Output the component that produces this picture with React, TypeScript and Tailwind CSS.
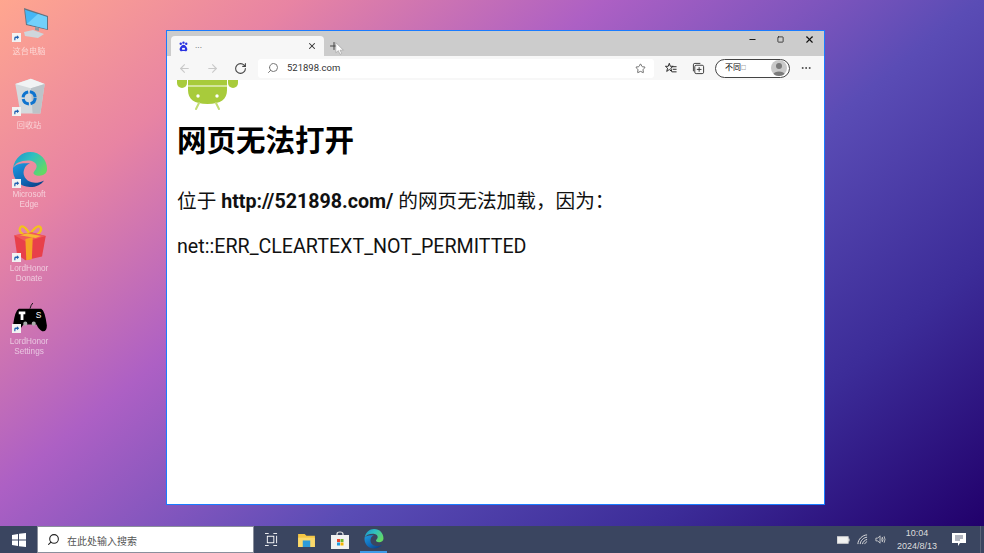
import { ArrowLeft, ArrowRight, RotateCw, Search, Star, X, Plus, Minus, Square, MoreHorizontal } from "lucide-react";

const cjk = "font-['Roboto','Noto_Sans_CJK_SC',sans-serif]";

const Shortcut = () => (
  <svg viewBox="0 0 10 10" className="absolute left-[1px] bottom-0 size-[9px]">
    <rect width="10" height="10" fill="#f2f2f2" />
    <path d="M2.500 8V5.500Q2.500 4 4.500 4H5.500V2.500L8 4.700 5.500 7V5.500H4.500Q3.800 5.500 3.800 6.300V8Z" fill="#1f5fb0" />
  </svg>
);

const PcIcon = () => (
  <svg viewBox="0 0 38 34" className="size-full">
    <path d="M13 0 37 8V22L15 17Z" fill="#66727e" />
    <path d="M14 1.800 36 9V21L15.800 16Z" fill="#45b6f5" />
    <path d="M15.800 16 27 6 36 9V21Z" fill="#72d0fa" />
    <path d="M24 19 28 20V23L24 22Z" fill="#8b97a1" />
    <path d="M13 24 22 22 33 26 27 30 14 28Z" fill="#cfd6dc" />
  </svg>
);

const BinIcon = () => (
  <svg viewBox="0 0 38 44" className="size-full">
    <path d="M2 7 20 1 36 7 31 41 8 41Z" fill="#d5dadd" />
    <path d="M2 7 20 1 36 7 20 12Z" fill="#f1f3f4" />
    <path d="M20 12 36 7 31 41 22 41Z" fill="#bcc3c8" />
    <circle cx="18" cy="23" r="7" fill="none" stroke="#0f74cf" strokeWidth="3.500" strokeDasharray="9 2" />
  </svg>
);

const EdgeIcon = ({ className = "size-full", id = "d" }: { className?: string; id?: string }) => (
  <svg viewBox="0 0 38 38" className={className}>
    <defs>
      <linearGradient id={`edgeA${id}`} x1="0" y1="0" x2="1" y2="0.6">
        <stop offset="0" stopColor="#1a8fd0" />
        <stop offset="0.5" stopColor="#2fc0c0" />
        <stop offset="1" stopColor="#62d866" />
      </linearGradient>
      <linearGradient id={`edgeB${id}`} x1="0" y1="0" x2="0.8" y2="1">
        <stop offset="0" stopColor="#1f9be0" />
        <stop offset="0.6" stopColor="#0f6ab8" />
        <stop offset="1" stopColor="#0b3f86" />
      </linearGradient>
    </defs>
    <path d="M1 17C3 6 11 0 19 0 30 0 37 8 37 18 37 23 33 25 29 25 24 25 22 23 23 21 24 19 26 18 26 15 26 11 21 9 17 9 9 9 3 12 1 17Z" fill={`url(#edgeA${id})`} />
    <path d="M1 17C0 28 8 37 19 37 26 37 31 34 34 30 28 33 22 33 18 31 13 28 11 23 13 18 14 15 16 13 19 12 10 11 3 13 1 17Z" fill={`url(#edgeB${id})`} />
  </svg>
);

const GiftIcon = () => (
  <svg viewBox="0 0 38 40" className="size-full">
    <path d="M18 11C10 12 6 6 9 2 12 0 16 5 19 10 22 5 27 0 30 2 33 6 28 12 20 11" fill="none" stroke="#f3c21b" strokeWidth="2.500" />
    <path d="M2 11 21 8 36 12 32 34 14 38 5 32Z" fill="#e8404a" />
    <path d="M2 11 21 8 36 12 15 18Z" fill="#f15a5a" />
    <path d="M14 15 22 13 21 37 15 38Z" fill="#f5a524" />
    <path d="M8 11 16 9 31 12 25 14Z" fill="#f7b733" />
  </svg>
);

const PadIcon = () => (
  <svg viewBox="0 0 38 32" className="size-full">
    <path d="M19 6Q20 2 22 0" stroke="#111" strokeWidth="1" fill="none" />
    <path d="M7 6H31Q35 8 37 24 37 31 32 30 28 28 26 23H12Q9 28 6 30 0 31 1 23 3 8 7 6Z" fill="#000" />
    <path d="M7 9H14V12H12V18H9V12H7Z" fill="#fff" />
    <text x="25" y="16" fontSize="9" fill="#fff" fontFamily="Liberation Sans, sans-serif">S</text>
    <circle cx="14" cy="22" r="2.200" fill="#aaa" />
    <circle cx="23" cy="22" r="2.200" fill="#aaa" />
  </svg>
);

const DesktopItem = ({ lines, box, label, children }: { lines: string[]; box: string; label: string; children: React.ReactNode }) => (
  <div className="flex flex-col items-center w-[58px]">
    <div className={`relative w-[38px] ml-[2px] ${box}`}>
      {children}
      <Shortcut />
    </div>
    <div className={`${label} text-[8.200px] leading-[10px] text-white/60 blur-[0.3px] text-center font-['Liberation_Sans','Noto_Sans_CJK_SC',sans-serif]`}>
      {lines.map((l) => (
        <div key={l}>{l}</div>
      ))}
    </div>
  </div>
);

const Android = () => (
  <svg viewBox="0 0 61 31" className="w-[61px] h-[31px] block">
    <rect x="0" y="-10" width="10" height="18" rx="5" fill="#a8cb3b" />
    <rect x="51" y="-10" width="10" height="18" rx="5" fill="#a8cb3b" />
    <rect x="11" y="0" width="39" height="5.500" fill="#a8cb3b" />
    <path d="M11 6.500H50V10C50 19 44 24 30.500 24 17 24 11 19 11 10Z" fill="#a8cb3b" />
    <circle cx="21" cy="16" r="1.700" fill="#fff" />
    <circle cx="40" cy="16" r="1.700" fill="#fff" />
    <path d="M22 23 19 29M39 23 42 29" stroke="#c3dc72" strokeWidth="2" strokeLinecap="round" />
  </svg>
);

const Favicon = () => (
  <svg viewBox="0 0 12 12" className="size-[11px]">
    <circle cx="3" cy="3" r="1.300" fill="#2932e1" />
    <circle cx="6" cy="1.800" r="1.300" fill="#2932e1" />
    <circle cx="9" cy="3" r="1.300" fill="#2932e1" />
    <path d="M6 4C8 4 11 8 10 10 9 12 7 11 6 11 5 11 3 12 2 10 1 8 4 4 6 4Z" fill="#2932e1" />
    <path d="M4.500 7.500H7.500V9.500H4.500Z" fill="#fff" />
  </svg>
);

const Favorites = () => (
  <svg viewBox="0 0 14 14" className="size-[12px]" fill="none" stroke="#222" strokeWidth="1.100">
    <path d="M5 1.500 6.200 5H9.500L6.800 7.200 7.800 11 5 8.800 2 11 3 7.200.5 5H3.800Z" />
    <path d="M9 5.500H13.500M9 8.500H13.500M8 11.500H13.500" />
  </svg>
);

const Collections = () => (
  <svg viewBox="0 0 14 14" className="size-[13px]" fill="none" stroke="#333" strokeWidth="1">
    <rect x="3" y="3.500" width="9.500" height="9" rx="1.500" />
    <path d="M1.500 10V3Q1.500 1.500 3 1.500H9" />
    <path d="M7.700 5.500V10.500M5.200 8H10.200" />
  </svg>
);

const Avatar = () => (
  <svg viewBox="0 0 16 16" className="size-[16px]">
    <circle cx="8" cy="8" r="8" fill="#c9c9c9" />
    <circle cx="8" cy="6" r="3" fill="#7b7b7b" />
    <path d="M2.500 14C3 10.500 13 10.500 13.500 14 11 16.500 5 16.500 2.500 14Z" fill="#7b7b7b" />
  </svg>
);

const Win = () => (
  <svg viewBox="0 0 14 14" className="size-[14px]" fill="#fff">
    <path d="M0 2 6 1V6.500H0ZM7 .8 14 0V6.500H7ZM0 7.500H6V13L0 12ZM7 7.500H14V14L7 13.200Z" />
  </svg>
);

const TaskView = () => (
  <svg viewBox="0 0 14 14" className="size-[13px]" fill="none" stroke="#fff" strokeWidth="1">
    <rect x="2.500" y="3.500" width="7" height="7" />
    <path d="M0 .5H4M0 13.500H4M9 .5H13M9 13.500H13M12.500 3V11" />
  </svg>
);

const Folder = () => (
  <svg viewBox="0 0 18 15" className="w-[17px] h-[14px]">
    <path d="M0 1H7L9 3H18V15H0Z" fill="#f5c644" />
    <rect x="0" y="5" width="18" height="10" fill="#fbd96b" />
    <rect x="5" y="8" width="8" height="7" fill="#2d9cdb" />
  </svg>
);

const Store = () => (
  <svg viewBox="0 0 18 18" className="size-[18px]">
    <path d="M6 5V3Q6 1 9 1 12 1 12 3V5" fill="none" stroke="#e5e5e5" strokeWidth="1.200" />
    <rect x="0" y="4" width="18" height="14" fill="#f1f1f1" />
    <rect x="6" y="8" width="3" height="3" fill="#e8452c" />
    <rect x="9.500" y="8" width="3" height="3" fill="#6fb52c" />
    <rect x="6" y="11.500" width="3" height="3" fill="#1d9be0" />
    <rect x="9.500" y="11.500" width="3" height="3" fill="#f5b400" />
  </svg>
);

const Wifi = () => (
  <svg viewBox="0 0 12 12" className="size-[11px]" fill="none" stroke="#e8e8e8" strokeWidth="1">
    <path d="M1 11C1 6 6 1 11 1M3.500 11C3.500 7.500 7.500 3.500 11 3.500M6 11C6 9 9 6 11 6M8.500 11C8.500 10 10 8.500 11 8.500" />
  </svg>
);

const Volume = () => (
  <svg viewBox="0 0 12 12" className="size-[11px]" fill="none" stroke="#d8d8d8" strokeWidth=".9">
    <path d="M1 4.500H3L5.500 2V10L3 7.500H1Z" />
    <path d="M8 3.500Q9.500 6 8 8.500 6.800 6 8 3.500ZM10 2.500Q11.800 6 10 9.500" />
  </svg>
);

const Battery = () => (
  <svg viewBox="0 0 14 8" className="w-[13px] h-[8px]">
    <rect x=".5" y=".5" width="11.500" height="7" fill="#f2f2f2" stroke="#ddd" />
    <rect x="12" y="2.500" width="1.500" height="3" fill="#ddd" />
  </svg>
);

const Notice = () => (
  <svg viewBox="0 0 14 13" className="w-[14px] h-[13px]">
    <path d="M0 0H14V10H8L6 13V10H0Z" fill="#fff" />
    <path d="M3 3H11M3 5H11M3 7H8" stroke="#3a4560" strokeWidth=".8" />
  </svg>
);

export default function App() {
  return (
    <div className={`w-[984px] h-[553px] flex flex-col overflow-hidden ${cjk}`}>
      <div className="relative flex-1 bg-[linear-gradient(141deg,#ffa68f_0%,#e884a3_18%,#ad60c4_37%,#7f55bd_50%,#5a4cb5_60%,#3c2c98_80%,#21006b_100%)]">
        <div className="flex flex-col pt-[8px]">
          <DesktopItem lines={["这台电脑"]} box="h-[34px]" label="mt-[5px]"><PcIcon /></DesktopItem>
          <div className="h-[21px]" />
          <DesktopItem lines={["回收站"]} box="h-[38px]" label="mt-[5px]"><BinIcon /></DesktopItem>
          <div className="h-[21px]" />
          <DesktopItem lines={["Microsoft", "Edge"]} box="h-[36px]" label="mt-[2px]"><EdgeIcon /></DesktopItem>
          <div className="h-[15px]" />
          <DesktopItem lines={["LordHonor", "Donate"]} box="h-[37px]" label="mt-[2px]"><GiftIcon /></DesktopItem>
          <div className="h-[19px]" />
          <DesktopItem lines={["LordHonor", "Settings"]} box="h-[30px]" label="mt-[4px]"><PadIcon /></DesktopItem>
        </div>

        {/* browser window */}
        <div className="absolute left-[166px] top-[30px] w-[659px] h-[475px] border border-[#1a7cff] bg-white flex flex-col">
          <div className="h-[25px] bg-[#cccccc] flex items-end pl-[4px] relative">
            <div className="w-[153px] h-[20px] bg-[#f7f7f7] rounded-t-[4px] flex items-center pl-[7px] pr-[7px]">
              <Favicon />
              <span className="ml-[6px] text-[9px] text-[#555] flex-1">...</span>
              <X size={10} strokeWidth={2.500} color="#333" />
            </div>
            <Plus size={12} color="#444" className="ml-[4px] mb-[4px]" />
            <div className="ml-auto flex items-center self-start h-[17px] text-[#111]">
              <Minus size={9} strokeWidth={2.500} className="mr-[20px]" />
              <Square size={7} strokeWidth={2.500} className="mr-[20px]" />
              <X size={11} strokeWidth={2.500} className="mr-[9px]" />
            </div>
            {/* mouse cursor */}
            <svg viewBox="0 0 12 16" className="absolute left-[168px] top-[10px] w-[10px] h-[15px]">
              <path d="M1 1V13L4 10.500 6 15 8 14 6 10H10Z" fill="#fff" stroke="#999" strokeWidth=".7" />
            </svg>
          </div>

          <div className="h-[24px] bg-[#f7f7f7] flex items-center">
            <ArrowLeft size={13} color="#c9c9c9" className="ml-[11px]" />
            <ArrowRight size={13} color="#c9c9c9" className="ml-[15px]" />
            <RotateCw size={13} color="#444" className="ml-[15px]" />
            <div className="ml-[11px] w-[396px] h-[19px] bg-white rounded-[3px] flex items-center pl-[9px] pr-[8px]">
              <Search size={12} color="#777" className="-scale-x-100" />
              <span className="ml-[8px] text-[9.500px] text-[#333]">521898.com</span>
              <Star size={11} color="#666" className="ml-auto" />
            </div>
            <div className="ml-[11px]"><Favorites /></div>
            <div className="ml-[15px]"><Collections /></div>
            <div className="ml-[10px] w-[75px] h-[19px] rounded-full border border-[#444] bg-white flex items-center pl-[9px] pr-[2px]">
              <span className="text-[8px] text-black">不同</span>
              <span className="text-[5px] text-[#333]">□</span>
              <div className="ml-auto"><Avatar /></div>
            </div>
            <MoreHorizontal size={12} color="#444" className="ml-[10px]" />
          </div>

          <div className="flex-1 pl-[10px]">
            <Android />
            <h1 className="mt-[12px] text-[29.500px] leading-[36px] font-bold text-black">网页无法打开</h1>
            <p className="mt-[31px] text-[19.660px] leading-[24px] text-[#111]">
              位于 <b>http://521898.com/</b> 的网页无法加载，因为：
            </p>
            <p className="mt-[21px] text-[19.660px] leading-[24px] text-[#111]">net::ERR_CLEARTEXT_NOT_PERMITTED</p>
          </div>
        </div>
      </div>

      {/* taskbar */}
      <div className="h-[27px] bg-[#3a4560] flex items-center">
        <div className="w-[37px] flex justify-center"><Win /></div>
        <div className="w-[217px] h-full bg-white border border-[#8a8f9c] flex items-center pl-[9px]">
          <Search size={13} color="#222" className="-scale-x-100" />
          <span className="ml-[7px] mt-[3px] text-[10px] text-[#555]">在此处输入搜索</span>
        </div>
        <div className="ml-[11px]"><TaskView /></div>
        <div className="ml-[20px]"><Folder /></div>
        <div className="ml-[16px]"><Store /></div>
        <div className="ml-[11px] h-full w-[27px] flex items-center justify-center border-b-2 border-[#3f9be8]">
          <EdgeIcon id="t" className="size-[20px]" />
        </div>
        <div className="ml-auto flex items-center text-[#ddd]">
          <Battery />
          <div className="ml-[7px]"><Wifi /></div>
          <div className="ml-[7px]"><Volume /></div>
          <div className="ml-[7px] w-[48px] text-center text-[9px] leading-[13px] font-['Liberation_Sans',sans-serif]">
            <div>10:04</div>
            <div>2024/8/13</div>
          </div>
          <div className="ml-[11px]"><Notice /></div>
          <div className="ml-[14px] w-[4px] h-[27px] border-l border-[#5a6478]" />
        </div>
      </div>
    </div>
  );
}
